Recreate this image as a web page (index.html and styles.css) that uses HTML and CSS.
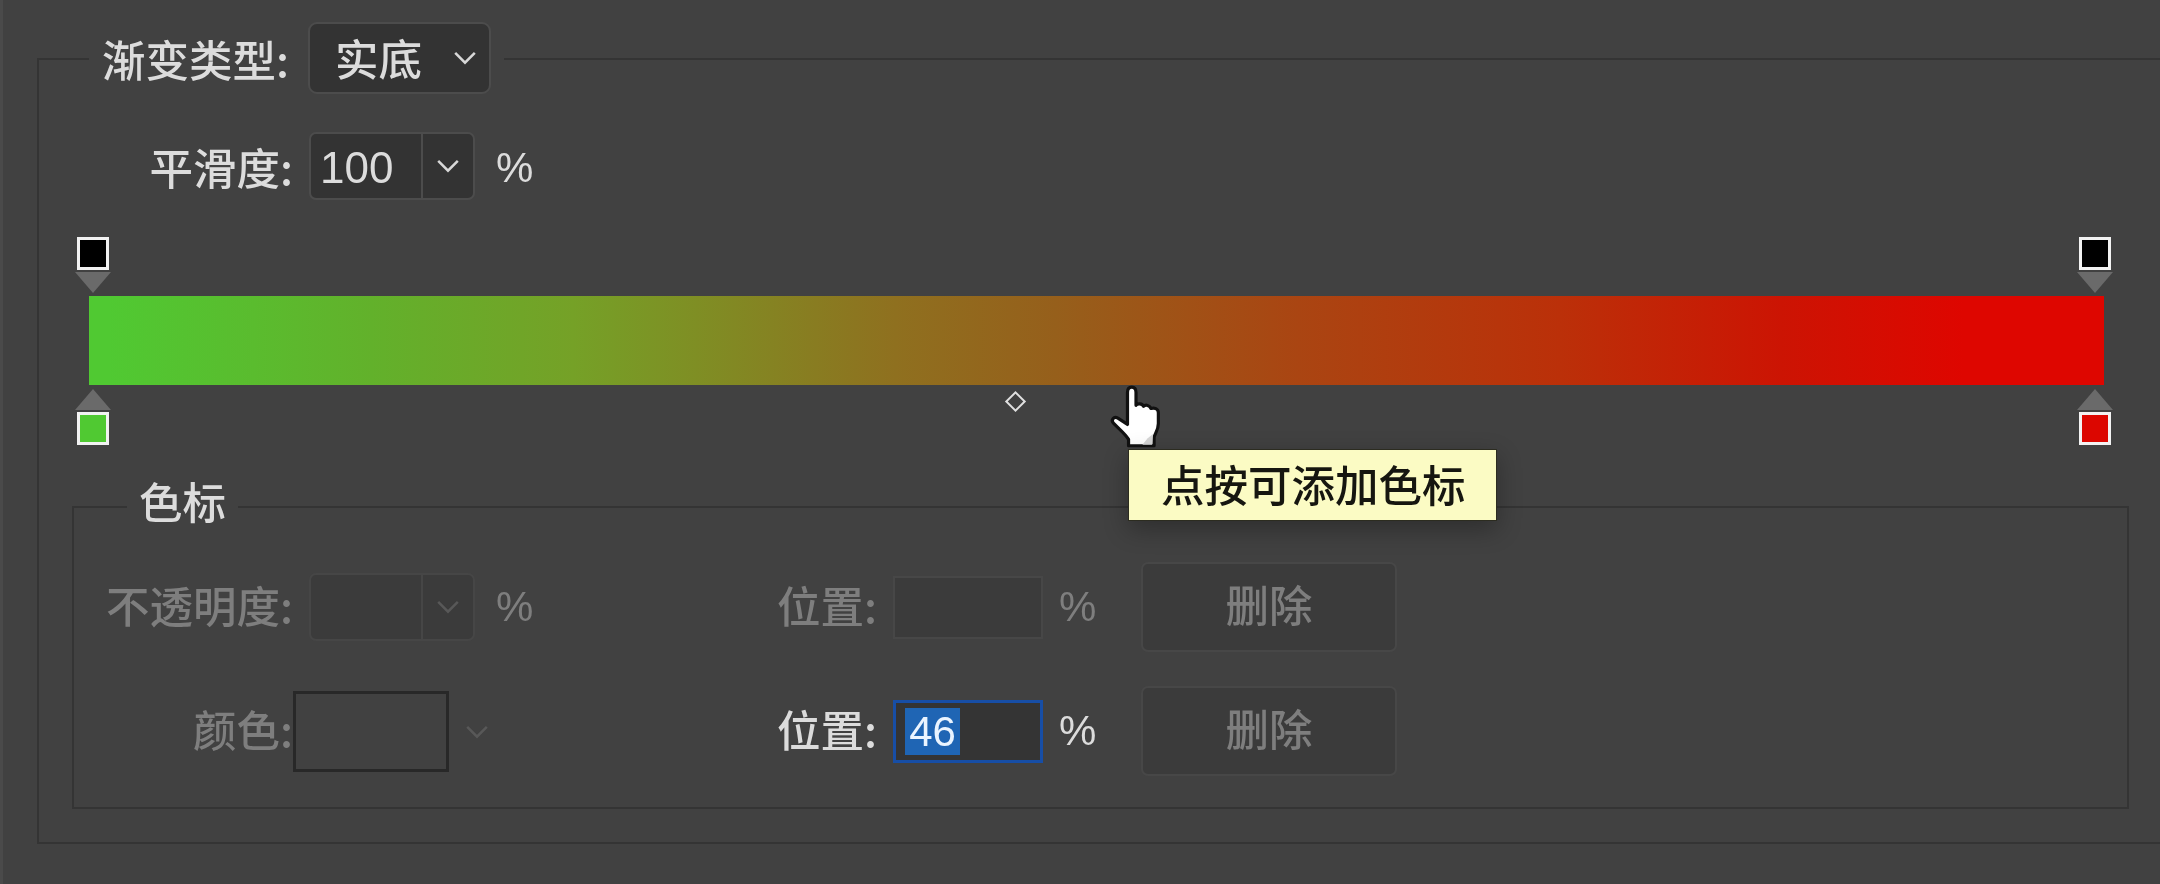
FILE: index.html
```html
<!DOCTYPE html>
<html lang="zh">
<head>
<meta charset="utf-8">
<title>渐变类型</title>
<link rel="stylesheet" href="styles.css">
</head>
<body>
<main class="panel">
  <fieldset class="outer">
    <legend class="outer-legend">
      <span class="title">渐变类型:</span>
      <div class="select"><span>实底</span>
        <svg class="chev" viewBox="0 0 20 12"><path d="M3 2l7 7 7-7"/></svg>
      </div>
    </legend>
    <div class="row smooth-row">
      <span class="label label-wide">平滑度:</span>
      <div class="spin">
        <span class="spin-value">100</span>
        <span class="spin-arrow"><svg class="chev" viewBox="0 0 20 12"><path d="M3 2l7 7 7-7"/></svg></span>
      </div>
      <span class="pct smooth-pct">%</span>
    </div>

    <div class="stops stops-top">
      <div class="stop"><span class="swatch black"></span><span class="tri tri-down"></span></div>
      <div class="stop"><span class="swatch black"></span><span class="tri tri-down"></span></div>
    </div>
    <div class="bar"></div>
    <div class="stops stops-bottom">
      <div class="stop"><span class="tri tri-up"></span><span class="swatch green"></span></div>
      <div class="stop"><span class="tri tri-up"></span><span class="swatch red"></span></div>
    </div>

    <fieldset class="inner">
      <legend class="inner-legend">色标</legend>
      <div class="row form-row first">
        <div class="left-group">
          <span class="label dim">不透明度:</span>
          <div class="spin spin-off">
            <span class="spin-value"></span>
            <span class="spin-arrow"><svg class="chev" viewBox="0 0 20 12"><path d="M3 2l7 7 7-7"/></svg></span>
          </div>
          <span class="pct dim">%</span>
        </div>
        <span class="pos-label dim">位置:</span>
        <div class="input input-off"></div>
        <span class="pct pos-pct dim">%</span>
        <button class="btn" type="button">删除</button>
      </div>
      <div class="row form-row second">
        <div class="left-group">
          <span class="label dim">颜色:</span>
          <div class="colorbox"></div>
          <svg class="chev chev-color" viewBox="0 0 20 12"><path d="M3 2l7 7 7-7"/></svg>
        </div>
        <span class="pos-label">位置:</span>
        <div class="input input-on"><span class="selected">46</span></div>
        <span class="pct pos-pct">%</span>
        <button class="btn" type="button">删除</button>
      </div>
    </fieldset>
  </fieldset>

  <span class="diamond"></span>
  <svg class="hand" viewBox="0 0 56 62">
    <path d="M24 3c3 0 4 2 4 5v12c1-2 6-2 7 1 2-2 6-1 7 2 3-1 7 0 7 4v10c0 6-3 9-4 13v8H21v-6c-3-5-8-9-14-15-3-3 0-7 4-5l9 6V8c0-3 1-5 4-5z"/>
    <path class="hand-shade" d="M34 57l9 0 1-10-5 4z"/>
  </svg>
  <div class="tooltip">点按可添加色标</div>
</main>
</body>
</html>
```
FILE: styles.css
```css
* { box-sizing: border-box; }
html, body { margin: 0; height: 100%; background: #414141; overflow: hidden; }
body {
  font-family: "Noto Sans CJK SC", "Liberation Sans", sans-serif;
  font-size: 43.5px;
  font-weight: 500;
  color: #dcdcdc;
}
.panel {
  position: relative;
  width: 2160px;
  height: 884px;
  padding: 23px 0 0 37px;
  overflow: hidden;
  filter: blur(0.7px);
  border-left: 3px solid #4a4a4a;
}
fieldset { margin: 0; min-width: 0; }
.outer {
  margin-left: -3px;
  width: 2133px;
  height: 821px;
  border: 2px solid #343434;
  padding: 0 0 32px;
}
.outer-legend {
  display: flex;
  align-items: center;
  margin-left: 50px;
  padding: 0 13px;
  height: 72px;
}
.title { width: 206px; line-height: 72px; white-space: nowrap; }
.select {
  width: 183px;
  height: 72px;
  margin-top: -2px;
  display: flex;
  align-items: center;
  justify-content: space-between;
  padding: 0 10px 0 25px;
  background: #333;
  border: 2px solid #4c4c4c;
  border-radius: 9px;
  line-height: 1;
}
.chev { width: 28px; height: 17px; fill: none; stroke: #d8d8d8; stroke-width: 1.8; }
.row { display: flex; align-items: center; }
.smooth-row { margin-top: 37px; height: 68px; }
.label { width: 219px; text-align: right; white-space: nowrap; line-height: 1; }
.label-wide { width: 254px; margin-top: 1px; }
.dim { color: #7e7e7e; }
.spin {
  margin-left: 16px;
  width: 166px;
  height: 68px;
  display: flex;
  background: #333;
  border: 2px solid #4c4c4c;
  border-radius: 7px;
}
.spin-value { flex: 1; padding-left: 9px; line-height: 68px; font-family: "Liberation Sans", sans-serif; font-size: 44px; font-weight: 400; }
.spin-arrow {
  width: 52px;
  display: flex;
  align-items: center;
  justify-content: center;
  border-left: 2px solid #4c4c4c;
}
.pct { margin-left: 21px; width: 38px; line-height: 1; font-family: "Liberation Sans", sans-serif; font-size: 42px; font-weight: 400; }
.smooth-pct { margin-top: 4px; }
.spin-off { background: #3b3b3b; border-color: #464646; }
.spin-off .spin-arrow { border-left-color: #464646; }
.spin-off .chev, .chev-color { stroke: #585858; }
.stops {
  display: flex;
  justify-content: space-between;
  margin-left: 37px;
  width: 2036px;
}
.stops-top { margin-top: 37px; height: 56px; }
.stops-bottom { margin-top: 4px; height: 56px; }
.stop { width: 34px; display: flex; flex-direction: column; align-items: center; }
.swatch { width: 32px; height: 33px; border: 3px solid #f2f2f2; flex: none; }
.black { background: #000; }
.green { background: #50c932; }
.red { background: #dc0600; }
.tri { width: 0; height: 0; border-left: 18px solid transparent; border-right: 18px solid transparent; flex: none; }
.tri-down { border-top: 21px solid #6a6a6a; margin-top: 2px; }
.tri-up { border-bottom: 21px solid #6a6a6a; margin-bottom: 2px; }
.bar {
  margin: 3px 0 0 50px;
  width: 2015px;
  height: 89px;
  background: linear-gradient(90deg, #50c932 1%, #62b12b 14%, #75a127 24%, #8f701f 40%, #965f1b 48%, #aa4512 60%, #bb3009 73%, #cc1403 84%, #de0600 93%);
}
.inner {
  margin: 32px 0 0 33px;
  width: 2057px;
  height: 332px;
  border: 2px solid #343434;
  padding: 0 0 31px;
}
.inner-legend {
  margin-left: 53px;
  padding: 0 12px;
  height: 60px;
  line-height: 48px;
}
.form-row { height: 90px; }
.form-row .label, .form-row .pos-label { margin-top: -4px; }
.first { margin-top: 25px; }
.second { margin-top: 34px; }
.left-group { display: flex; align-items: center; width: 703px; flex: none; }
.pos-label { width: 99px; text-align: right; white-space: nowrap; line-height: 1; flex: none; }
.input { margin-left: 17px; width: 150px; height: 63px; flex: none; }
.input-off { background: #3b3b3b; border: 2px solid #474747; }
.input-on {
  background: #343434;
  border: 3px solid #174ea6;
  padding: 5px 0 5px 9px;
  display: flex;
}
.selected {
  background: #1f65b4;
  color: #eaf4ff;
  width: 55px;
  line-height: 47px;
  font-size: 42px;
  font-weight: 400;
  font-family: "Liberation Sans", sans-serif;
  text-align: center;
}
.pos-pct { margin-left: 16px; flex: none; }
.btn {
  margin-left: 44px;
  width: 256px;
  height: 90px;
  flex: none;
  background: #3b3b3b;
  border: 2px solid #474747;
  border-radius: 7px;
  color: #7e7e7e;
  font: inherit;
  line-height: 1;
  padding: 0 0 6px;
}
.colorbox { width: 156px; height: 81px; border: 3px solid #282828; background: #414141; flex: none; }
.chev-color { margin-left: 14px; margin-top: 2px; }
.diamond {
  position: absolute;
  left: 1005px;
  top: 394px;
  width: 15px;
  height: 15px;
  border: 2px solid #e0e0e0;
  transform: rotate(45deg);
}
.hand { position: absolute; left: 1102px; top: 384px; width: 62px; height: 66px; }
.hand path { fill: #fff; stroke: #111; stroke-width: 3; stroke-linejoin: round; }
.hand .hand-shade { fill: #d6d6d6; stroke: none; }
.tooltip {
  position: absolute;
  left: 1125px;
  top: 449px;
  width: 369px;
  height: 72px;
  background: #fbfbc4;
  border: 1px solid #2c2c20;
  color: #161610;
  font-size: 43.5px;
  line-height: 68px;
  padding-left: 32px;
  white-space: nowrap;
  box-shadow: 0 8px 24px rgba(0,0,0,.3);
}
```
